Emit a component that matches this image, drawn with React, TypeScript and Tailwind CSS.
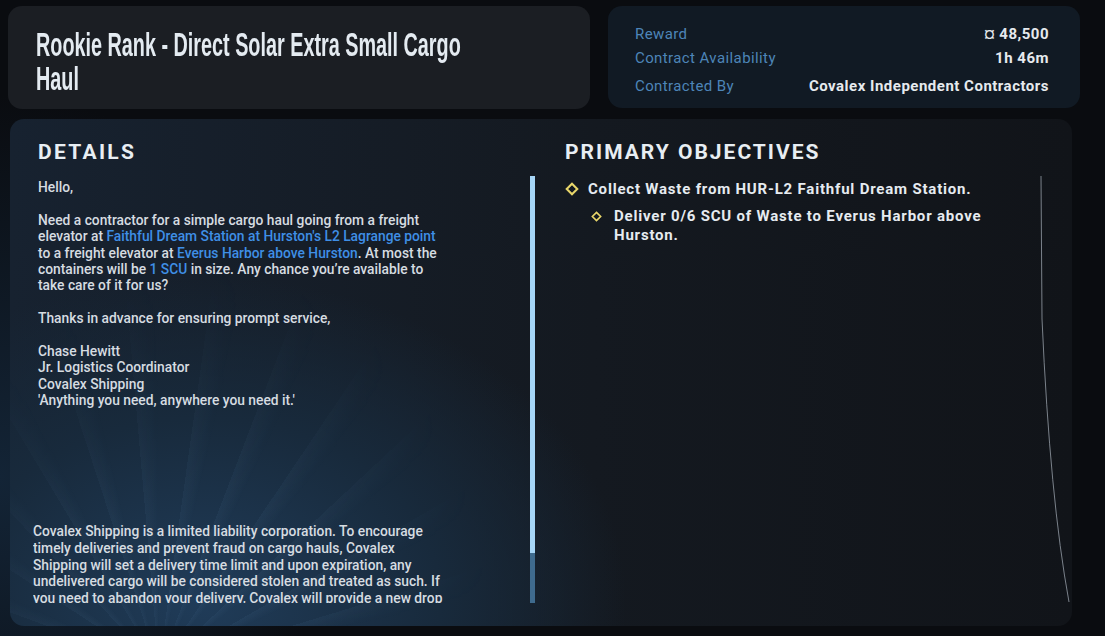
import React from "react";

function Link({ children }: { children: React.ReactNode }) {
  return <span className="text-[#3f8fe6]">{children}</span>;
}

function Diamond({ size }: { size: number }) {
  return (
    <svg width={size} height={size} viewBox="0 0 12 12" className="shrink-0">
      <path d="M6 1.5 L10.5 6 L6 10.5 L1.5 6 Z" fill="none" stroke="#e8d66a" strokeWidth={1.8} />
    </svg>
  );
}

function InfoRow({ label, value, h }: { label: string; value: string; h: string }) {
  return (
    <div className={`flex items-center justify-between ${h}`}>
      <span className="text-[15px] text-[#4d85b8] tracking-[0.4px]">{label}</span>
      <span className="text-[15px] font-bold text-[#e6eaee] tracking-[0.5px]">{value}</span>
    </div>
  );
}

export default function App() {
  return (
    <div className="w-[1105px] h-[636px] bg-[radial-gradient(ellipse_30%_60%_at_0%_75%,#132436_0%,transparent_100%)] bg-[#0a0c10] overflow-hidden font-['Roboto',sans-serif]">
      <div className="flex pt-[6px] pl-[8px] gap-[18px]">
        <div className="w-[582px] h-[103px] rounded-[14px] bg-[#1b1e23] pl-[28px] pt-[22px]">
          <h1 className="w-[740px] origin-left scale-x-[0.6] font-['Liberation_Sans_Narrow','Liberation_Sans',sans-serif] font-stretch-condensed text-[33px] leading-[34px] font-bold text-[#e4ebf1]">
            Rookie Rank - Direct Solar Extra Small Cargo Haul
          </h1>
        </div>
        <div className="w-[472px] h-[102px] rounded-[14px] bg-[#111a24] pl-[27px] pr-[31px] pt-[17px]">
          <InfoRow label="Reward" value="¤ 48,500" h="h-[23px]" />
          <InfoRow label="Contract Availability" value="1h 46m" h="h-[24px]" />
          <InfoRow label="Contracted By" value="Covalex Independent Contractors" h="h-[28px] pt-[4px]" />
        </div>
      </div>

      <div className="relative mt-[10px] ml-[10px] w-[1062px] h-[507px] rounded-[14px] overflow-hidden bg-[radial-gradient(ellipse_50%_80%_at_18%_95%,#203c59_0%,#182a3c_45%,transparent_80%),linear-gradient(90deg,#172230_0%,#141920_55%,#111419_100%)]">
        <div className="absolute left-0 top-0 w-[620px] h-full bg-[repeating-conic-gradient(from_290deg_at_24%_108%,rgba(140,190,235,0.05)_0deg,transparent_5deg,transparent_13deg)] [mask-image:radial-gradient(ellipse_60%_90%_at_30%_100%,black_30%,transparent_80%)]" />
        <svg className="absolute left-0 top-0" width="1062" height="507">
          <path d="M1031 57 L1032 200 Q1040 380 1059 483" fill="none" stroke="#7b828b" strokeWidth={1} />
        </svg>

        <div className="relative grid grid-cols-[497px_1fr] gap-x-[30px] h-full pl-[28px] pt-[20px]">
          <div className="flex flex-col">
            <h2 className="text-[21px] font-bold tracking-[2.3px] text-[#e8eef3] leading-[26px]">DETAILS</h2>
            <div className="flex flex-1 mt-[11px] mb-[23px]">
              <div className="flex-1 flex flex-col justify-between text-[13.8px] leading-[16.4px] font-medium text-[#d6dce1]">
                <div className="pt-[3px] w-[408px]">
                  <p>Hello,</p>
                  <p className="mt-[16.4px]">
                    Need a contractor for a simple cargo haul going from a freight elevator at{" "}
                    <Link>Faithful Dream Station at Hurston's L2 Lagrange point</Link> to a freight
                    elevator at <Link>Everus Harbor above Hurston</Link>. At most the containers will
                    be <Link>1 SCU</Link> in size. Any chance you’re available to take care of it for us?
                  </p>
                  <p className="mt-[16.4px]">Thanks in advance for ensuring prompt service,</p>
                  <p className="mt-[16.4px]">
                    Chase Hewitt
                    <br />
                    Jr. Logistics Coordinator
                    <br />
                    Covalex Shipping
                    <br />
                    'Anything you need, anywhere you need it.'
                  </p>
                </div>
                <div className="-ml-[5px] h-[80px] overflow-hidden shrink-0">
                  <p className="leading-[16.8px] whitespace-nowrap">
                    Covalex Shipping is a limited liability corporation. To encourage
                    <br />
                    timely deliveries and prevent fraud on cargo hauls, Covalex
                    <br />
                    Shipping will set a delivery time limit and upon expiration, any
                    <br />
                    undelivered cargo will be considered stolen and treated as such. If
                    <br />
                    you need to abandon your delivery, Covalex will provide a new drop
                  </p>
                </div>
              </div>
              <div className="w-[5px] flex flex-col">
                <div className="flex-1 bg-[#a6d6f7]" />
                <div className="h-[50px] bg-[#3f6b8e]" />
              </div>
            </div>
          </div>

          <div>
            <h2 className="text-[21px] font-bold tracking-[2px] text-[#e8eef3] leading-[26px]">
              PRIMARY OBJECTIVES
            </h2>
            <div className="mt-[13px] flex items-center gap-[9px]">
              <Diamond size={14} />
              <span className="text-[15px] font-bold tracking-[0.8px] text-[#e6ebf0]">
                Collect Waste from HUR-L2 Faithful Dream Station.
              </span>
            </div>
            <div className="mt-[6px] ml-[26px] flex items-start gap-[12px]">
              <div className="pt-[4px]">
                <Diamond size={11} />
              </div>
              <span className="text-[15px] leading-[19px] font-bold tracking-[0.8px] text-[#e6ebf0] w-[380px]">
                Deliver 0/6 SCU of Waste to Everus Harbor above Hurston.
              </span>
            </div>
          </div>
        </div>
      </div>
    </div>
  );
}
